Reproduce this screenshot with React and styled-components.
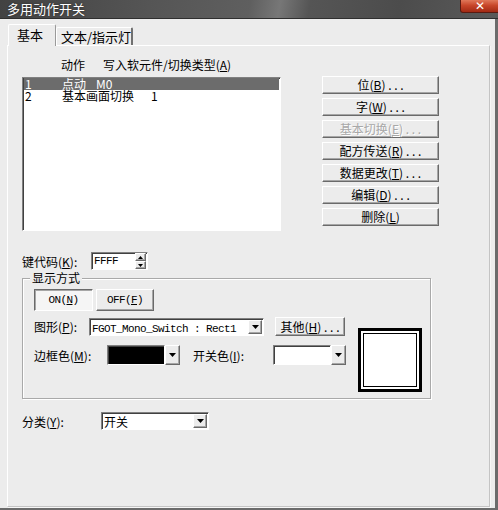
import React from "react";
import styled, { createGlobalStyle, css } from "styled-components";

const Global = createGlobalStyle`
  html, body { margin: 0; padding: 0; background: #ececec; }
  body { font-family: "Noto Sans CJK SC", "Noto Sans", sans-serif; font-size: 12px; color: #000; }
  * { box-sizing: border-box; }
`;

const raised = css`
  border: 1px solid;
  border-color: #ffffff #6a6a6a #6a6a6a #ffffff;
  box-shadow: inset -1px -1px 0 #a6a6a6;
  background: #ececec;
`;

const sunken = css`
  border: 1px solid;
  border-color: #808080 #ffffff #ffffff #808080;
  box-shadow: inset 1px 1px 0 #404040;
  background: #fff;
`;

const Window = styled.div`
  width: 498px;
  height: 510px;
  display: flex;
  flex-direction: column;
  background: #ececec;
  overflow: hidden;
`;

const TitleBar = styled.div`
  height: 19px;
  flex: none;
  display: flex;
  align-items: flex-start;
  border-bottom: 1px solid #2f2f2f;
  background: linear-gradient(100deg, #424242 0%, #555 30%, #5f5f5f 50%, #777 56%, #555 62%, #4c4c4c 80%, #5a5a5a 100%);
`;

const Title = styled.span`
  color: #fff;
  font-size: 13px;
  line-height: 17px;
  padding-left: 7px;
  text-shadow: 0 0 2px #222;
`;

const CloseButton = styled.div`
  margin-left: auto;
  width: 40px;
  height: 13px;
  border: 1px solid #5a1a10;
  border-top: none;
  border-radius: 0 0 0 3px;
  background: linear-gradient(180deg, #e0785a 0%, #c8462a 45%, #a22a14 100%);
  display: flex;
  align-items: center;
  justify-content: center;
  color: #fff;
  font-family: "DejaVu Sans", sans-serif;
  font-weight: bold;
  font-size: 12px;
  line-height: 12px;
  margin-right: -2px;
`;

const Frame = styled.div`
  flex: 1;
  display: flex;
  flex-direction: column;
  padding: 5px 5px 1px 7px;
  border-right: 3px solid #6b6b6b;
  border-bottom: 2px solid #6b6b6b;
`;

const TabStrip = styled.div`
  display: flex;
  align-items: flex-end;
  padding-left: 1px;
  height: 21px;
  position: relative;
  z-index: 1;
`;

const Tab = styled.div`
  ${({ $active }) =>
    $active
      ? css`
          width: 48px;
          height: 22px;
          margin-bottom: -1px;
          padding: 2px 0 0 8px;
          font-size: 13px;
          border-right: 1px solid #9a9a9a;
        `
      : css`
          width: 77px;
          height: 18px;
          padding: 1px 0 0 4px;
          font-size: 13px;
          border-right: 2px solid #707070;
        `}
  border-top: 1px solid #fff;
  border-left: 1px solid #fff;
  border-radius: 2px 2px 0 0;
  background: #ececec;
  line-height: 16px;
  white-space: nowrap;
`;

const Panel = styled.div`
  flex: 1;
  border: 1px solid;
  border-color: #ffffff #c4c4c4 #c4c4c4 #ffffff;
  box-shadow: 1px 1px 0 #f6f6f6;
  padding: 12px 0 0 14px;
  display: flex;
  flex-direction: column;
`;

const Header = styled.div`
  display: flex;
  gap: 18px;
  padding-left: 39px;
  height: 13px;
  line-height: 13px;
`;

const TopRow = styled.div`
  display: flex;
  align-items: flex-start;
  margin-top: 5px;
`;

const ListBox = styled.div`
  ${sunken};
  width: 259px;
  height: 154px;
  margin-top: 1px;
  padding: 0 1px;
`;

const ListRow = styled.div`
  display: flex;
  height: 12px;
  line-height: 12px;
  padding-left: 1px;
  ${({ $selected }) => $selected && css`background: #6c6c6c; color: #fff;`}
`;

const ColNo = styled.span`
  width: 37px;
`;

const ColName = styled.span`
  width: ${({ $w }) => $w}px;
`;

const ButtonColumn = styled.div`
  display: flex;
  flex-direction: column;
  gap: 4px;
  margin-left: 41px;
`;

const Button = styled.div`
  ${raised};
  width: ${({ $w }) => $w || 117}px;
  height: ${({ $h }) => $h || 18}px;
  display: flex;
  align-items: center;
  justify-content: center;
  line-height: 14px;
  white-space: nowrap;
  color: ${({ $disabled }) => ($disabled ? "#a8a8a8" : "#000")};
  text-shadow: ${({ $disabled }) => ($disabled ? "1px 1px 0 #fff" : "none")};
`;

const ToggleButton = styled.div`
  width: ${({ $w }) => $w}px;
  height: 22px;
  display: flex;
  align-items: center;
  justify-content: center;
  font-family: "Liberation Mono", monospace;
  font-size: 11px;
  letter-spacing: -0.6px;
  ${({ $pressed }) =>
    $pressed
      ? css`
          border: 1px solid;
          border-color: #6a6a6a #ffffff #ffffff #6a6a6a;
          box-shadow: inset 1px 1px 0 #a6a6a6;
          background: #f5f5f5;
        `
      : raised}
`;

const FieldRow = styled.div`
  display: flex;
  align-items: center;
  margin-top: ${({ $mt }) => $mt || 0}px;
`;

const Label = styled.span`
  width: ${({ $w }) => $w}px;
  flex: none;
  white-space: nowrap;
`;

const Mono = styled.span`
  font-family: "Liberation Mono", monospace;
  font-size: 11px;
  letter-spacing: -0.6px;
`;

const SpinBox = styled.div`
  ${sunken};
  width: 57px;
  height: 18px;
  display: flex;
  align-items: center;
  padding-left: 2px;
`;

const SpinButtons = styled.div`
  margin-left: auto;
  margin-right: 1px;
  display: flex;
  flex-direction: column;
`;

const SpinButton = styled.div`
  ${raised};
  width: 11px;
  height: 8px;
  display: flex;
  align-items: center;
  justify-content: center;
`;

const Combo = styled.div`
  ${sunken};
  width: ${({ $w }) => $w}px;
  height: ${({ $h }) => $h || 18}px;
  display: flex;
  align-items: center;
  padding-left: 2px;
  white-space: nowrap;
  overflow: hidden;
`;

const ComboText = styled.span`
  flex: 1;
  overflow: hidden;
`;

const ArrowButton = styled.div`
  ${raised};
  width: 14px;
  align-self: stretch;
  margin: 1px 1px 1px 0;
  flex: none;
  display: flex;
  align-items: center;
  justify-content: center;
`;

const ColorCombo = styled.div`
  display: flex;
  width: 73px;
  height: 20px;
`;

const Swatch = styled.div`
  ${sunken};
  flex: 1;
  background: ${({ $color }) => $color};
`;

const ColorArrow = styled.div`
  ${raised};
  width: 15px;
  display: flex;
  align-items: center;
  justify-content: center;
`;

const Group = styled.div`
  position: relative;
  margin-top: 8px;
  width: 409px;
  height: 121px;
  border: 1px solid #a9a9a9;
  box-shadow: inset 1px 1px 0 #fff, 1px 1px 0 #fff;
  padding: 10px 0 0 11px;
  display: flex;
`;

const GroupLegend = styled.span`
  position: absolute;
  top: -8px;
  left: 7px;
  padding: 0 2px;
  background: #ececec;
  line-height: 14px;
`;

const GroupMain = styled.div`
  display: flex;
  flex-direction: column;
  width: 312px;
`;

const ToggleRow = styled.div`
  display: flex;
  gap: 3px;
`;

const Preview = styled.div`
  width: 64px;
  height: 64px;
  margin: 39px 0 0 12px;
  border: 3px solid #000;
  background: #fff;
  padding: 2px;
`;

const PreviewInner = styled.div`
  width: 100%;
  height: 100%;
  border: 1px solid #000;
`;

const Gap = styled.span`
  width: ${({ $w }) => $w}px;
  flex: none;
`;

const Arrow = ({ size = 7 }) => (
  <svg width={size} height={4} viewBox="0 0 7 4">
    <path d="M0 0h7L3.5 4z" fill="#000" />
  </svg>
);

const UpArrow = () => (
  <svg width="5" height="3" viewBox="0 0 5 3">
    <path d="M0 3h5L2.5 0z" fill="#000" />
  </svg>
);
const DownArrow = () => (
  <svg width="5" height="3" viewBox="0 0 5 3">
    <path d="M0 0h5L2.5 3z" fill="#000" />
  </svg>
);

const K = ({ c }) => (
  <>
    (<u>{c}</u>)
  </>
);

const buttons = [
  { t: "位", k: "B", dots: true },
  { t: "字", k: "W", dots: true },
  { t: "基本切换", k: "E", dots: true, disabled: true },
  { t: "配方传送", k: "R", dots: true },
  { t: "数据更改", k: "T", dots: true },
  { t: "编辑", k: "D", dots: true },
  { t: "删除", k: "L" },
];

export default function App() {
  return (
    <Window>
      <Global />
      <TitleBar>
        <Title>多用动作开关</Title>
        <CloseButton>✕</CloseButton>
      </TitleBar>
      <Frame>
        <TabStrip>
          <Tab $active>基本</Tab>
          <Tab>文本/指示灯</Tab>
        </TabStrip>
        <Panel>
          <Header>
            <span>动作</span>
            <span>
              写入软元件/切换类型<K c="A" />
            </span>
          </Header>
          <TopRow>
            <ListBox>
              <ListRow $selected>
                <ColNo>1</ColNo>
                <ColName $w={34}>点动</ColName>
                <span>M0</span>
              </ListRow>
              <ListRow>
                <ColNo>2</ColNo>
                <ColName $w={89}>基本画面切换</ColName>
                <span>1</span>
              </ListRow>
            </ListBox>
            <ButtonColumn>
              {buttons.map((b) => (
                <Button key={b.k} $disabled={b.disabled}>
                  {b.t}
                  <K c={b.k} />
                  {b.dots ? " . . ." : ""}
                </Button>
              ))}
            </ButtonColumn>
          </TopRow>

          <FieldRow $mt={21}>
            <Label $w={69}>
              键代码<K c="K" />:
            </Label>
            <SpinBox>
              <Mono>FFFF</Mono>
              <SpinButtons>
                <SpinButton>
                  <UpArrow />
                </SpinButton>
                <SpinButton>
                  <DownArrow />
                </SpinButton>
              </SpinButtons>
            </SpinBox>
          </FieldRow>

          <Group>
            <GroupLegend>显示方式</GroupLegend>
            <GroupMain>
              <ToggleRow>
                <ToggleButton $pressed $w={59}>
                  ON(<u>N</u>)
                </ToggleButton>
                <ToggleButton $w={58}>
                  OFF(<u>F</u>)
                </ToggleButton>
              </ToggleRow>
              <FieldRow $mt={6}>
                <Label $w={55}>
                  图形<K c="P" />:
                </Label>
                <Combo $w={175}>
                  <ComboText>
                    <Mono>FGOT_Mono_Switch : Rect1</Mono>
                  </ComboText>
                  <ArrowButton>
                    <Arrow />
                  </ArrowButton>
                </Combo>
                <Gap $w={11} />
                <Button $w={70} $h={19}>
                  其他<K c="H" /> . . .
                </Button>
              </FieldRow>
              <FieldRow $mt={9}>
                <Label $w={73}>
                  边框色<K c="M" />:
                </Label>
                <ColorCombo>
                  <Swatch $color="#000" />
                  <ColorArrow>
                    <Arrow />
                  </ColorArrow>
                </ColorCombo>
                <Gap $w={13} />
                <Label $w={80}>
                  开关色<K c="I" />:
                </Label>
                <ColorCombo>
                  <Swatch $color="#fff" />
                  <ColorArrow>
                    <Arrow />
                  </ColorArrow>
                </ColorCombo>
              </FieldRow>
            </GroupMain>
            <Preview>
              <PreviewInner />
            </Preview>
          </Group>

          <FieldRow $mt={13}>
            <Label $w={79}>
              分类<K c="Y" />:
            </Label>
            <Combo $w={108}>
              <ComboText>开关</ComboText>
              <ArrowButton>
                <Arrow />
              </ArrowButton>
            </Combo>
          </FieldRow>
        </Panel>
      </Frame>
    </Window>
  );
}
